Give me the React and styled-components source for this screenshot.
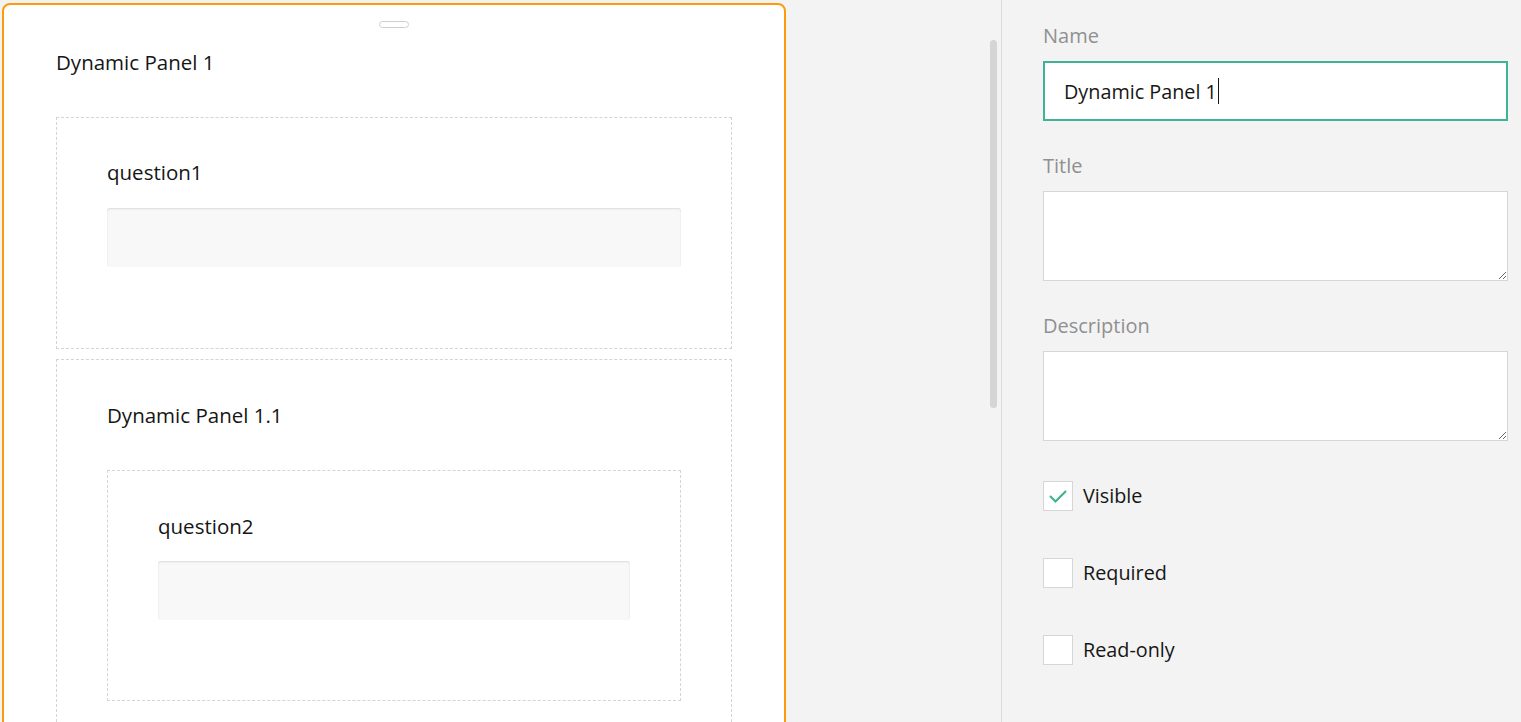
import React from 'react'
import styled, { createGlobalStyle } from 'styled-components'

const GlobalStyle = createGlobalStyle`
  html, body {
    margin: 0;
    padding: 0;
    height: 100%;
    overflow: hidden;
  }
  body {
    font-family: "Open Sans", "Noto Sans", sans-serif;
    background: #f3f3f3;
    color: #161616;
  }
`

const Page = styled.div`
  display: flex;
  height: 100vh;
  background: #f3f3f3;
  overflow: hidden;
`

const Designer = styled.div`
  display: flex;
  align-items: flex-start;
  width: 1001px;
  padding: 3px 0 0 2px;
  box-sizing: border-box;
`

const Card = styled.div`
  flex-shrink: 0;
  width: 784px;
  box-sizing: border-box;
  background: #fff;
  border: 2px solid #ff9a0a;
  border-radius: 8px;
  padding: 0 52px 40px;
  display: flex;
  flex-direction: column;

  & > * {
    flex-shrink: 0;
  }
`

const Handle = styled.div`
  align-self: center;
  width: 30px;
  height: 7px;
  margin-top: 16px;
  box-sizing: border-box;
  border: 1px solid #cfcfcf;
  border-radius: 4px;
`

const PanelTitle = styled.div`
  font-size: 20.5px;
  font-weight: 500;
  line-height: 28px;
  margin: 20px 0 0 0;
  height: 28px;
`

const Box = styled.div`
  border: 1px dashed #d4d4d4;
  padding: ${p => p.$top}px 50px ${p => p.$bottom}px;
  margin-top: ${p => p.$gap}px;
`

const QTitle = styled.div`
  font-size: 20.5px;
  font-weight: 500;
  line-height: 28px;
  height: 28px;
  margin-bottom: ${p => p.$gap}px;
`

const QInput = styled.div`
  height: 59px;
  background: #f8f8f8;
  border-radius: 3px;
  box-shadow: inset 0 1px 2px rgba(0, 0, 0, 0.12);
`

const ScrollTrack = styled.div`
  margin-left: auto;
  margin-right: 4px;
  margin-top: 37px;
  width: 7px;
  height: 368px;
  border-radius: 4px;
  background: #d5d5d5;
`

const Properties = styled.div`
  flex: 1;
  border-left: 1px solid #dcdcdc;
  padding: 22px 13px 0 41px;
  display: flex;
  flex-direction: column;
`

const Label = styled.div`
  font-size: 20px;
  line-height: 28px;
  color: #909090;
  margin-top: ${p => p.$gap || 0}px;
  margin-bottom: 11px;
`

const NameField = styled.div`
  height: 60px;
  box-sizing: border-box;
  border: 2px solid #3fb393;
  background: #fff;
  padding: 0 19px;
  display: flex;
  align-items: center;
  font-size: 19.8px;
`

const Caret = styled.span`
  display: inline-block;
  width: 1px;
  height: 26px;
  background: #161616;
  margin-left: 1px;
`

const TextArea = styled.textarea`
  height: 90px;
  box-sizing: border-box;
  border: 1px solid #d6d6d6;
  background: #fff;
  resize: vertical;
  outline: none;
  font-family: inherit;
  font-size: 20px;
`

const CheckRow = styled.label`
  display: flex;
  align-items: center;
  gap: 10px;
  margin-top: ${p => p.$gap}px;
  font-size: 19.8px;
  line-height: 28px;
`

const CheckBox = styled.span`
  width: 30px;
  height: 30px;
  box-sizing: border-box;
  border: 1px solid #d6d6d6;
  background: #fff;
  display: flex;
  align-items: center;
  justify-content: center;
`

function Check({ checked, children, gap }) {
  return (
    <CheckRow $gap={gap}>
      <CheckBox>
        {checked && (
          <svg width="20" height="16" viewBox="0 0 20 16">
            <polyline points="2,8 7.5,13.5 18,3" fill="none" stroke="#3fb393" strokeWidth="2.2" />
          </svg>
        )}
      </CheckBox>
      {children}
    </CheckRow>
  )
}

export default function App() {
  return (
    <>
      <GlobalStyle />
      <Page>
        <Designer>
          <Card>
            <Handle />
            <PanelTitle>Dynamic Panel 1</PanelTitle>
            <Box $top={40} $bottom={81} $gap={41}>
              <QTitle $gap={22}>question1</QTitle>
              <QInput />
            </Box>
            <Box $top={41} $bottom={80} $gap={10}>
              <QTitle $gap={41}>Dynamic Panel 1.1</QTitle>
              <Box $top={41} $bottom={80} $gap={0}>
                <QTitle $gap={21}>question2</QTitle>
                <QInput />
              </Box>
            </Box>
          </Card>
          <ScrollTrack />
        </Designer>
        <Properties>
          <Label>Name</Label>
          <NameField>
            Dynamic Panel 1<Caret />
          </NameField>
          <Label $gap={31}>Title</Label>
          <TextArea />
          <Label $gap={31}>Description</Label>
          <TextArea />
          <Check checked gap={40}>Visible</Check>
          <Check gap={47}>Required</Check>
          <Check gap={47}>Read-only</Check>
        </Properties>
      </Page>
    </>
  )
}
